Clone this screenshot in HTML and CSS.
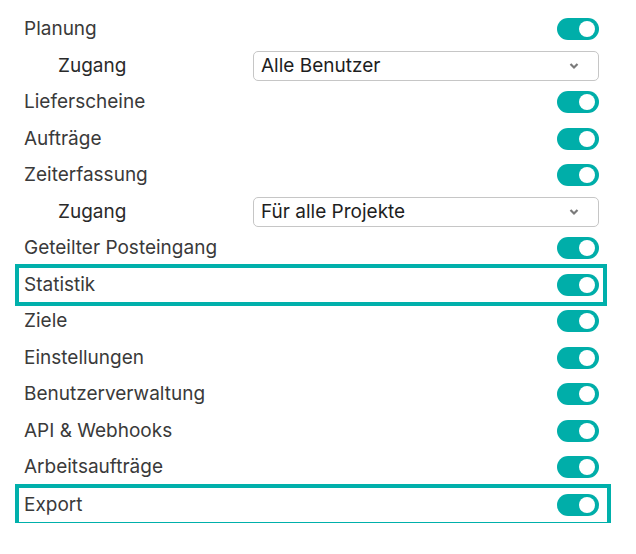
FILE: index.html
```html
<!DOCTYPE html>
<html lang="de">
<head>
  <meta charset="UTF-8" />
  <title>Module</title>
  <link rel="stylesheet" href="styles.css">
</head>
<body>
  <div class="settings">
    <div class="row"><span class="label">Planung</span><span class="toggle"></span></div>
    <div class="row sub">
      <span class="label">Zugang</span>
      <div class="select"><span>Alle Benutzer</span>
        <svg class="chevron" width="12" height="8" viewBox="0 0 12 8"><path d="M2.5 2l3.5 3.5 3.5-3.5" fill="none" stroke="#7a7a7a" stroke-width="2.2"/></svg>
      </div>
    </div>
    <div class="row"><span class="label">Lieferscheine</span><span class="toggle"></span></div>
    <div class="row"><span class="label">Aufträge</span><span class="toggle"></span></div>
    <div class="row"><span class="label">Zeiterfassung</span><span class="toggle"></span></div>
    <div class="row sub">
      <span class="label">Zugang</span>
      <div class="select"><span>Für alle Projekte</span>
        <svg class="chevron" width="12" height="8" viewBox="0 0 12 8"><path d="M2.5 2l3.5 3.5 3.5-3.5" fill="none" stroke="#7a7a7a" stroke-width="2.2"/></svg>
      </div>
    </div>
    <div class="row"><span class="label">Geteilter Posteingang</span><span class="toggle"></span></div>
    <div class="row highlight"><span class="label">Statistik</span><span class="toggle"></span></div>
    <div class="row"><span class="label">Ziele</span><span class="toggle"></span></div>
    <div class="row"><span class="label">Einstellungen</span><span class="toggle"></span></div>
    <div class="row"><span class="label">Benutzerverwaltung</span><span class="toggle"></span></div>
    <div class="row"><span class="label">API &amp; Webhooks</span><span class="toggle"></span></div>
    <div class="row"><span class="label">Arbeitsaufträge</span><span class="toggle"></span></div>
    <div class="row highlight wide"><span class="label">Export</span><span class="toggle"></span></div>
  </div>
</body>
</html>
```

FILE: styles.css
```css
* {
  box-sizing: border-box;
  margin: 0;
  padding: 0;
}

body {
  font-family: "Inter", "Noto Sans", sans-serif;
  background: #ffffff;
  color: #3a3a3a;
}

.settings {
  width: 604px;
  padding: 11px 0 0 18px;
}

.row {
  display: flex;
  align-items: center;
  justify-content: space-between;
  height: 36.5px;
  padding: 0 5px 0 6px;
}

.label {
  font-size: 19px;
  line-height: 22px;
}

.row.sub .label {
  padding-left: 34px;
  color: #2a2a2a;
}

/* Toggle switch, always on here */
.toggle {
  position: relative;
  width: 42px;
  height: 22px;
  border-radius: 11px;
  background-color: #00aea9;
}
.toggle::after {
  content: "";
  position: absolute;
  top: 3px;
  right: 4px;
  width: 16px;
  height: 16px;
  border-radius: 50%;
  background: #fff;
}

/* Dropdown */
.select {
  display: flex;
  align-items: center;
  justify-content: space-between;
  width: 346px;
  height: 30px;
  padding: 0 18px 0 7px;
  border: 1px solid #c6c6c6;
  border-radius: 5px;
  font-size: 19px;
  color: #1e1e1e;
}

/* Highlighted rows */
.highlight {
  outline: 4px solid #00b0ab;
  outline-offset: -1px;
}
.highlight.wide {
  width: 590px;
  margin-top: 1px;
  padding-right: 9px;
}
```
